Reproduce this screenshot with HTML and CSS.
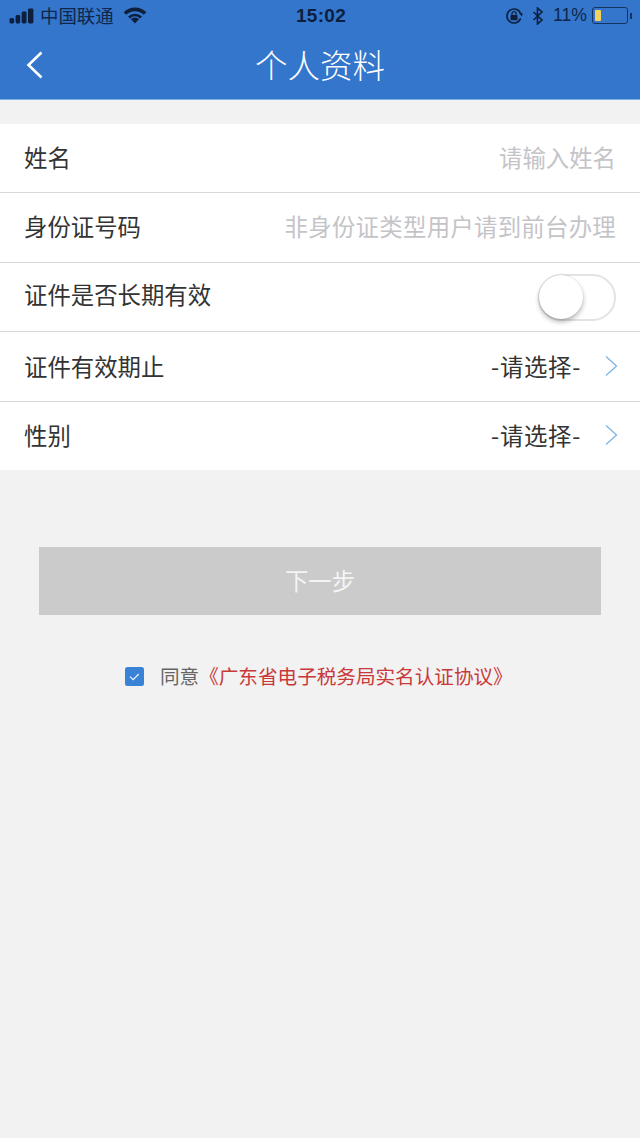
FILE: index.html
```html
<!DOCTYPE html>
<html lang="zh">
<head>
<meta charset="utf-8">
<title>个人资料</title>
<link rel="stylesheet" href="styles.css">
</head>
<body>
<header class="top">
  <div class="status">
    <div class="status-left">
      <svg class="signal" width="26" height="16" viewBox="0 0 26 16"><rect x="0.5" y="10" width="4.6" height="5.5" rx="1.6"/><rect x="6.6" y="7" width="4.6" height="8.5" rx="1.4"/><rect x="12.7" y="3.5" width="4.8" height="12" rx="1.4"/><rect x="19" y="0.5" width="5.4" height="15" rx="1.4"/></svg>
      <span class="carrier">中国联通</span>
      <svg class="wifi" width="24" height="17" viewBox="0 0 24 17"><path d="M12 16.5 L7.9 12 A6.2 6.2 0 0 1 16.1 12 Z"/><path d="M5 9.6 A10 10 0 0 1 19 9.6 L17.1 11.4 A7.4 7.4 0 0 0 6.9 11.4 Z"/><path d="M0.6 5.2 A16 16 0 0 1 23.4 5.2 L20.8 7.8 A12.4 12.4 0 0 0 3.2 7.8 Z"/></svg>
    </div>
    <span class="time">15:02</span>
    <div class="status-right">
      <svg class="lock" width="18" height="18" viewBox="0 0 18 18"><path class="line" d="M15.6 11.2A7 7 0 1 1 15.6 6.8"/><path d="M16.9 9.6l-2.6-3 3.4-.6z"/><rect x="5.5" y="8" width="7" height="5.2" rx="1"/><path class="line thin" d="M7 8V6.6a2 2 0 0 1 4 0V8"/></svg>
      <svg class="bt" width="12" height="18" viewBox="0 0 12 18"><path class="line" d="M1.5 5l8.5 8-4.5 4V1l4.5 4-8.5 8"/></svg>
      <span class="pct">11%</span>
      <span class="battery"><span class="level"></span></span>
      <span class="cap"></span>
    </div>
  </div>
  <div class="nav">
    <svg class="back" width="18" height="28" viewBox="0 0 18 28"><path d="M15.5 1.5L2.5 14l13 12.5"/></svg>
    <h1 class="title">个人资料</h1>
  </div>
</header>

<main>
  <section class="form">
    <div class="row"><span class="label">姓名</span><span class="hint">请输入姓名</span></div>
    <div class="row"><span class="label">身份证号码</span><span class="hint wide">非身份证类型用户请到前台办理</span></div>
    <div class="row"><span class="label">证件是否长期有效</span><span class="switch"><span class="knob"></span></span></div>
    <div class="row"><span class="label">证件有效期止</span><span class="value">-请选择-<svg class="chev" width="14" height="22" viewBox="0 0 14 22"><path d="M2 1.5L12.5 11 2 20.5"/></svg></span></div>
    <div class="row"><span class="label">性别</span><span class="value">-请选择-<svg class="chev" width="14" height="22" viewBox="0 0 14 22"><path d="M2 1.5L12.5 11 2 20.5"/></svg></span></div>
  </section>

  <button class="next" type="button">下一步</button>

  <div class="agree">
    <svg class="check" width="19" height="19" viewBox="0 0 19 19"><rect width="19" height="19" rx="2.5" fill="#3a82d6"/><path d="M5 9.6l3.2 3 5.6-5.6" fill="none" stroke="#e8f1fb" stroke-width="1.3"/></svg>
    <span class="agree-text">同意</span>
    <span class="agree-link">《广东省电子税务局实名认证协议》</span>
  </div>
</main>
</body>
</html>
```

FILE: styles.css
```css
* { box-sizing: border-box; }
html, body { margin: 0; padding: 0; }
body {
  width: 640px;
  height: 1138px;
  overflow: hidden;
  background: #f2f2f2;
  font-family: "Noto Sans CJK SC", "Liberation Sans", sans-serif;
  color: #333;
}
.top {
  height: 100px;
  background: #3476cc;
  border-bottom: 1px solid #7fb0e2;
}
.status {
  height: 31px;
  padding: 0 8px 0 9px;
  display: grid;
  grid-template-columns: 1fr auto 1fr;
  align-items: center;
  color: #0d1f3c;
}
.status-left, .status-right { display: flex; align-items: center; }
.status-right { justify-content: flex-end; }
.signal, .wifi, .lock { fill: #0d1f3c; }
.signal { margin-right: 5px; }
.carrier { font-size: 18.4px; line-height: 31px; color: #10264a; }
.wifi { margin-left: 9px; }
.time { font-family: "Liberation Sans", sans-serif; font-size: 19px; font-weight: 700; color: #0d1f3c; letter-spacing: .3px; margin-left: 1px; }
.line { fill: none; stroke: #0d1f3c; stroke-width: 1.6; }
.thin { stroke-width: 1.2; }
.bt { margin-left: 9px; }
.pct { font-family: "Liberation Sans", sans-serif; font-size: 17.6px; margin-left: 9px; color: #10264a; }
.battery {
  display: flex;
  width: 36px;
  height: 17px;
  margin-left: 5px;
  padding: 2px;
  border: 1px solid #16335f;
  border-radius: 3px;
}
.level { width: 6px; background: #f2d45c; border-radius: 1px; }
.cap { width: 2px; height: 6px; margin-left: 2px; background: #16335f; }
.nav {
  height: 68px;
  position: relative;
  display: flex;
  align-items: center;
  justify-content: center;
}
.back {
  position: absolute;
  left: 26px;
  top: 20px;
  fill: none;
  stroke: #fff;
  stroke-width: 2.6;
}
.title {
  margin: 0 0 3px;
  font-size: 32.5px;
  font-weight: 300;
  color: #fff;
  line-height: 65px;
}
.form {
  margin-top: 24px;
  background: #fff;
}
.row {
  height: 70px;
  padding: 0 24px 2px;
  display: flex;
  align-items: center;
  justify-content: space-between;
  border-bottom: 1px solid #d8d8d8;
  font-size: 23.4px;
}
.row:nth-child(1), .row:nth-child(3) { height: 69px; }
.row:nth-child(2) { padding-bottom: 4px; }
.row:nth-child(3) { padding-bottom: 6px; }
.row:last-child { border-bottom: 0; height: 68px; }
.label { color: #333; }
.hint { color: #c4c4c8; }
.wide { letter-spacing: .28px; }
.value { display: flex; align-items: center; color: #333; margin-right: -2px; letter-spacing: .7px; }
.chev {
  margin-left: 23px;
  fill: none;
  stroke: #7db4e2;
  stroke-width: 1.3;
}
.switch {
  display: block;
  position: relative;
  width: 78px;
  height: 47px;
  margin-top: 7px;
  border: 2px solid #e3e3e3;
  border-radius: 24px;
  background: #fff;
}
.knob {
  position: absolute;
  left: -1px;
  top: -1px;
  width: 44px;
  height: 44px;
  border-radius: 50%;
  background: #fff;
  box-shadow: 0 3px 5px rgba(0,0,0,.28), 0 0 2px rgba(0,0,0,.12);
}
.next {
  display: block;
  width: 562px;
  height: 68px;
  margin: 77px 0 0 39px;
  padding-bottom: 3px;
  border: 0;
  background: #cbcbcb;
  color: #f4f4f4;
  font-family: inherit;
  font-size: 23.4px;
}
.agree {
  margin: 49px 0 0 125px;
  height: 25px;
  display: flex;
  align-items: center;
  font-size: 19.6px;
}
.check { margin-right: 16px; }
.agree-text { color: #666; position: relative; top: -1px; }
.agree-link { color: #c9393a; position: relative; top: -1px; }
```
